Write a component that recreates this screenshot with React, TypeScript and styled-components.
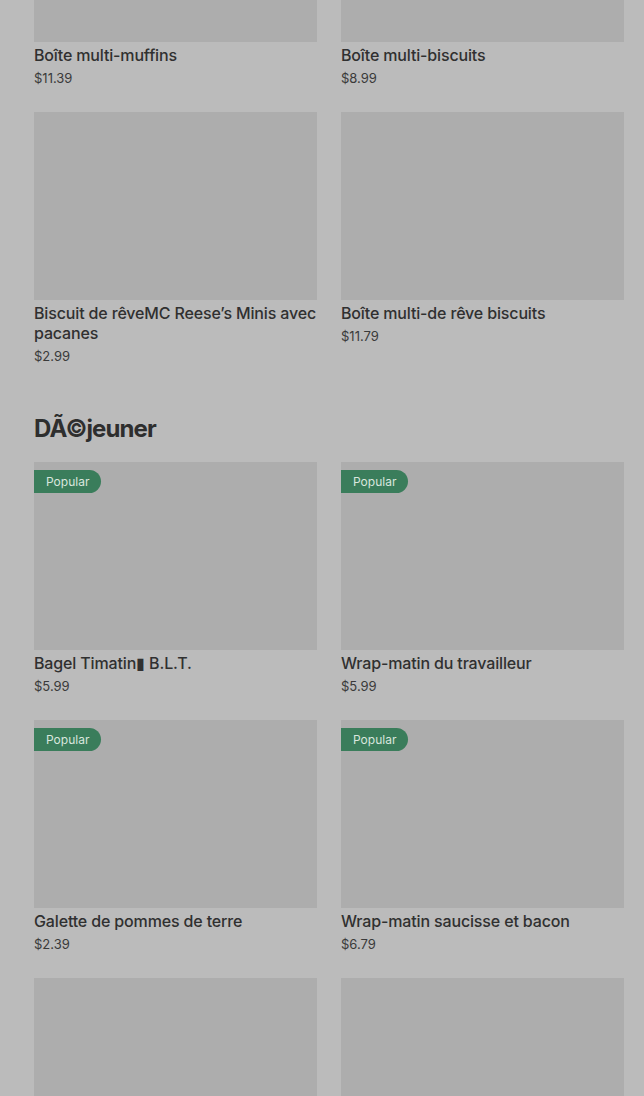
import styled, { createGlobalStyle } from 'styled-components'

const GlobalStyle = createGlobalStyle`
  html, body {
    margin: 0;
    padding: 0;
    background: #bbbbbb;
    font-family: Inter, "Noto Sans", "Liberation Sans", sans-serif;
    overflow: hidden;
  }
`

const Page = styled.div`
  height: 100vh;
  overflow: hidden;
`

const Scroller = styled.div`
  margin-top: -146px;
  padding: 0 20px 0 34px;
`

const Section = styled.section`
  padding-bottom: 48px;
`

const SectionTitle = styled.h2`
  margin: 0 0 17px;
  font-size: 24px;
  line-height: 32px;
  font-weight: 700;
  letter-spacing: -0.9px;
  color: #2e2e2e;
`

const Grid = styled.div`
  display: grid;
  grid-template-columns: 1fr 1fr;
  column-gap: 24px;
  row-gap: 25px;
`

const Card = styled.div`
  display: flex;
  flex-direction: column;
`

const Thumb = styled.div`
  position: relative;
  height: 188px;
  background: #adadad;
`

const Badge = styled.span`
  position: absolute;
  top: 8px;
  left: 0;
  height: 23px;
  padding: 0 12px;
  display: flex;
  align-items: center;
  border-radius: 0 12px 12px 0;
  background: #3a7d5b;
  color: #d9e6de;
  font-size: 12px;
  font-weight: 400;
`

const Name = styled.div`
  margin-top: 3px;
  font-size: 16px;
  line-height: 20px;
  font-weight: 500;
  letter-spacing: -0.15px;
  color: #303030;
`

const Price = styled.div`
  margin-top: 4px;
  font-size: 13px;
  line-height: 18px;
  color: #3a3a3a;
`

interface Item {
  name?: string
  price?: string
  popular?: boolean
}

const treats: Item[] = [
  { name: 'Boîte multi-muffins', price: '$11.39' },
  { name: 'Boîte multi-biscuits', price: '$8.99' },
  { name: 'Biscuit de rêveMC Reese’s Minis avec pacanes', price: '$2.99' },
  { name: 'Boîte multi-de rêve biscuits', price: '$11.79' },
]

// the last row is only partly scrolled into view: just the pictures show
const breakfast: Item[] = [
  { name: 'Bagel Timatin▮ B.L.T.', price: '$5.99', popular: true },
  { name: 'Wrap-matin du travailleur', price: '$5.99', popular: true },
  { name: 'Galette de pommes de terre', price: '$2.39', popular: true },
  { name: 'Wrap-matin saucisse et bacon', price: '$6.79', popular: true },
  {},
  {},
]

const ProductCard = ({ name, price, popular }: Item) => (
  <Card>
    <Thumb>{popular && <Badge>Popular</Badge>}</Thumb>
    {name && <Name>{name}</Name>}
    {price && <Price>{price}</Price>}
  </Card>
)

export default function App() {
  return (
    <>
      <GlobalStyle />
      <Page>
        <Scroller>
          <Section>
            <Grid>
              {treats.map((item, i) => (
                <ProductCard key={i} {...item} />
              ))}
            </Grid>
          </Section>
          <Section>
            <SectionTitle>DÃ©jeuner</SectionTitle>
            <Grid>
              {breakfast.map((item, i) => (
                <ProductCard key={i} {...item} />
              ))}
            </Grid>
          </Section>
        </Scroller>
      </Page>
    </>
  )
}
